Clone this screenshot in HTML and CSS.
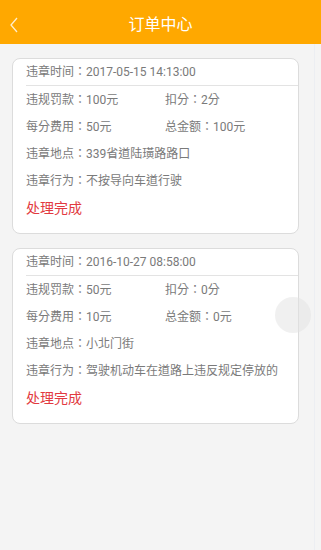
FILE: index.html
```html
<!DOCTYPE html>
<html lang="zh-Hant">
<head>
    <meta charset="UTF-8">
    <title>订单中心</title>
    <link rel="stylesheet" href="styles.css">
</head>
<body>
    <div class="header">
        <svg class="back" width="10" height="16" viewBox="0 0 10 16">
            <path d="M8 1 L2 8 L8 15" fill="none" stroke="#fff" stroke-width="1.3" stroke-opacity="0.8"/>
        </svg>
        <div class="title">订单中心</div>
    </div>

    <div class="list">
        <div class="card">
            <div class="row first">违章时间：2017-05-15 14:13:00</div>
            <div class="line"></div>
            <div class="row two">
                <span>违规罚款：100元</span>
                <span>扣分：2分</span>
            </div>
            <div class="row two">
                <span>每分费用：50元</span>
                <span>总金额：100元</span>
            </div>
            <div class="row">违章地点：339省道陆璜路路口</div>
            <div class="row">违章行为：不按导向车道行驶</div>
            <div class="row status">处理完成</div>
        </div>

        <div class="card">
            <div class="row first">违章时间：2016-10-27 08:58:00</div>
            <div class="line"></div>
            <div class="row two">
                <span>违规罚款：50元</span>
                <span>扣分：0分</span>
            </div>
            <div class="row two">
                <span>每分费用：10元</span>
                <span>总金额：0元</span>
            </div>
            <div class="row">违章地点：小北门街</div>
            <div class="row">违章行为：驾驶机动车在道路上违反规定停放的</div>
            <div class="row status">处理完成</div>
        </div>
    </div>

    <div class="float-btn"></div>
</body>
</html>
```

FILE: styles.css
```css
body {
    margin: 0;
    background: #f4f4f4;
    font-family: Roboto, "Noto Sans CJK TC", sans-serif;
    height: 550px;
    overflow: hidden;
    position: relative;
}

.header {
    height: 44px;
    background: #ffa800;
    display: flex;
    align-items: center;
    justify-content: center;
    position: relative;
}

.back {
    position: absolute;
    left: 9px;
    top: 17px;
}

.title {
    color: #fff;
    font-size: 16px;
    margin-top: 2px;
}

.list {
    padding: 14px 15px 0 12px;
    border-right: 1px solid #eceef2;
    margin-right: 6px;
    height: 492px;
}

.card {
    background: #fff;
    border: 1px solid #dcdcdc;
    border-radius: 8px;
    padding-bottom: 11px;
    margin-bottom: 14px;
    color: #7a7a7a;
    font-size: 12px;
}

.row {
    height: 27px;
    line-height: 27px;
    padding-left: 13px;
    white-space: nowrap;
}

.row.first {
    height: 26px;
    line-height: 26px;
}

.line {
    height: 1px;
    background: #e3e3e3;
    margin-left: 13px;
    margin-bottom: 1px;
}

.two {
    display: flex;
}

.two span:first-child {
    width: 139px;
}

.status {
    color: #e23a3f;
    font-size: 14px;
}

.float-btn {
    position: absolute;
    left: 275px;
    top: 297px;
    width: 36px;
    height: 36px;
    border-radius: 50%;
    background: rgba(225, 225, 225, 0.5);
}
```
